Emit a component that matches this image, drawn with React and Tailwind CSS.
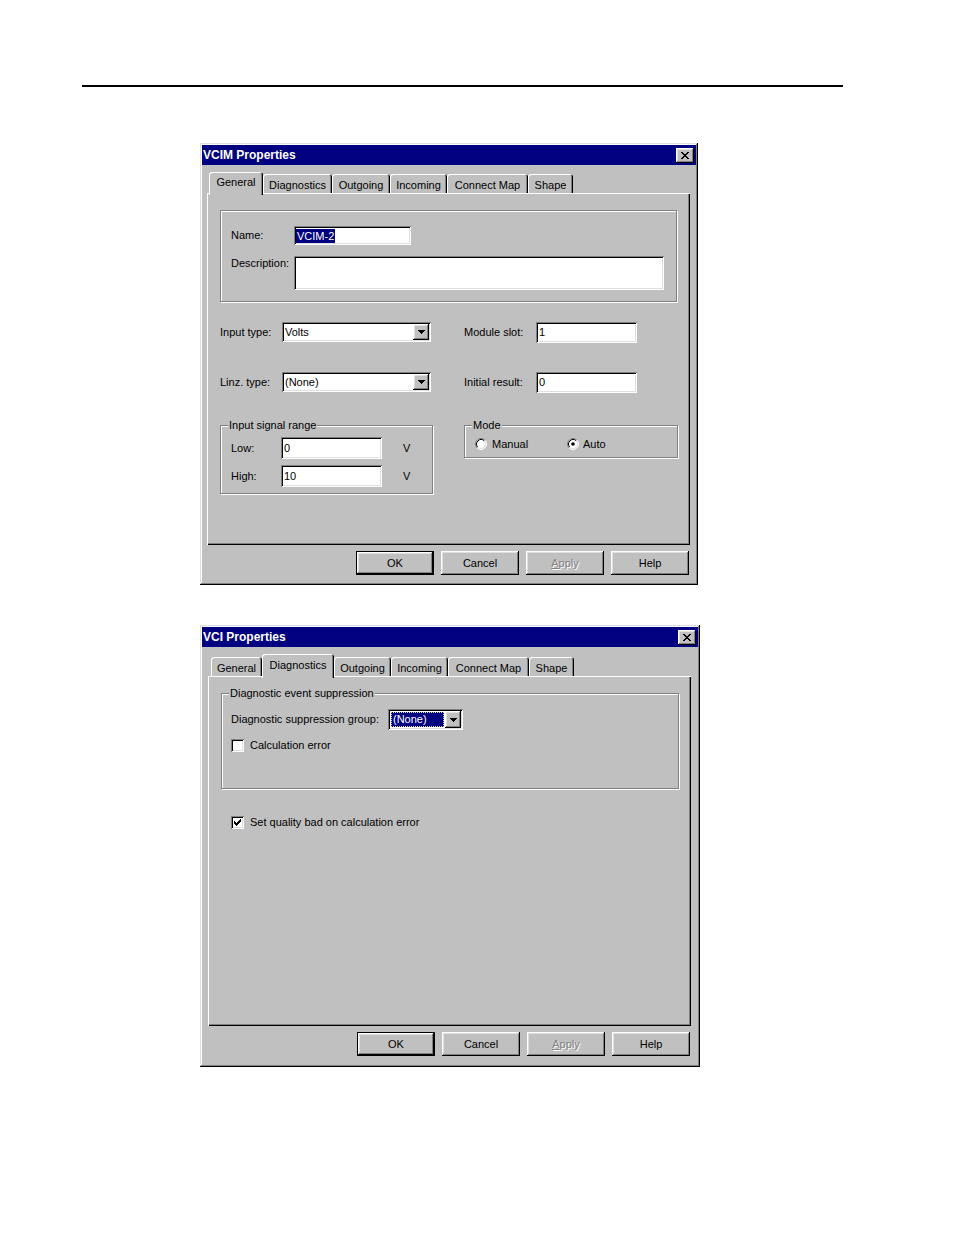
import React from "react";

const RAISED =
  "shadow-[inset_-1px_-1px_#000,inset_1px_1px_#fff,inset_-2px_-2px_#808080,inset_2px_2px_#dfdfdf]";
const WINDOW =
  "shadow-[inset_-1px_-1px_#000,inset_1px_1px_#dfdfdf,inset_-2px_-2px_#808080,inset_2px_2px_#fff]";
const SUNKEN =
  "shadow-[inset_1px_1px_#808080,inset_-1px_-1px_#fff,inset_2px_2px_#000,inset_-2px_-2px_#dfdfdf]";

const CLOSE_X = [
  "##....##",
  ".##..##.",
  "..####..",
  "...##...",
  "..####..",
  ".##..##.",
  "##....##",
];
const ARROW = ["#######", ".#####.", "..###..", "...#..."];
const CHECK = [
  "......#",
  ".....##",
  "#...###",
  "##.###.",
  "#####..",
  ".###...",
  "..#....",
];

function Pixels({ rows, color = "#000" }) {
  const w = rows[0].length;
  const h = rows.length;
  const rects = [];
  rows.forEach((r, y) =>
    [...r].forEach((c, x) => {
      if (c === "#")
        rects.push(<rect key={x + "-" + y} x={x} y={y} width="1" height="1" />);
    })
  );
  return (
    <svg width={w} height={h} viewBox={`0 0 ${w} ${h}`} fill={color} shapeRendering="crispEdges">
      {rects}
    </svg>
  );
}

function Window({ title, className, children }) {
  return (
    <div className={`${className} h-[442px] bg-[#c0c0c0] p-[2px] ${WINDOW}`}>
      <div className="h-[20px] bg-[#000080] flex items-center justify-between pl-[1px] pr-[2px]">
        <span className="text-white font-bold text-[12px] leading-none">{title}</span>
        <div className={`w-[18px] h-[15px] bg-[#c0c0c0] flex items-center justify-center ${RAISED}`}>
          <Pixels rows={CLOSE_X} />
        </div>
      </div>
      {children}
    </div>
  );
}

function Tab({ className, selected, children }) {
  return (
    <div
      className={`${className} ${
        selected ? "relative z-10 -mb-[2px] pb-[2px]" : "h-[19px] pt-[3px]"
      } bg-[#c0c0c0] rounded-t-[3px] flex items-center justify-center shadow-[inset_1px_1px_#fff,inset_-1px_0_#000,inset_-2px_0_#808080]`}
    >
      {children}
    </div>
  );
}

function Panel({ className, children }) {
  return (
    <div
      className={`${className} w-[483px] bg-[#c0c0c0] shadow-[inset_1px_1px_#fff,inset_-1px_-1px_#000,inset_-2px_-2px_#808080]`}
    >
      {children}
    </div>
  );
}

function Btn({ children, def, disabled }) {
  return (
    <div
      className={`w-[78px] h-[24px] bg-[#c0c0c0] flex items-center justify-center ${RAISED} ${
        def ? "border border-black" : ""
      } ${disabled ? "text-[#808080] [text-shadow:1px_1px_0_#fff]" : ""}`}
    >
      {children}
    </div>
  );
}

function Buttons() {
  return (
    <div className="mt-[6px] w-[483px] pr-[1px] flex justify-end gap-[7px]">
      <Btn def>OK</Btn>
      <Btn>Cancel</Btn>
      <Btn disabled>
        <span>
          <span className="underline">A</span>pply
        </span>
      </Btn>
      <Btn>Help</Btn>
    </div>
  );
}

function Field({ className, children }) {
  return <div className={`${className} bg-white flex items-center ${SUNKEN}`}>{children}</div>;
}

function DropBtn() {
  return (
    <div className={`w-[16px] bg-[#c0c0c0] flex items-center justify-center ${RAISED}`}>
      <Pixels rows={ARROW} />
    </div>
  );
}

function Select({ className, children }) {
  return (
    <div className={`${className} bg-white p-[2px] flex ${SUNKEN}`}>
      <div className="flex-1 flex items-center pl-[1px]">{children}</div>
      <DropBtn />
    </div>
  );
}

function Group({ label, className, children }) {
  return (
    <div className={`relative border border-[#808080] shadow-[inset_1px_1px_#fff,1px_1px_#fff] ${className}`}>
      {label && (
        <span className="absolute left-[7px] top-[-8px] bg-[#c0c0c0] px-[1px] leading-[14px] whitespace-nowrap">
          {label}
        </span>
      )}
      {children}
    </div>
  );
}

function Radio({ checked }) {
  return (
    <svg width="12" height="12" viewBox="0 0 12 12">
      <circle cx="6" cy="6" r="5" fill="#fff" />
      <path d="M2.11 9.89A5.5 5.5 0 0 1 9.89 2.11" stroke="#808080" fill="none" />
      <path d="M9.89 2.11A5.5 5.5 0 0 1 2.11 9.89" stroke="#fff" fill="none" />
      <path d="M2.82 9.18A4.5 4.5 0 0 1 9.18 2.82" stroke="#000" fill="none" />
      <path d="M9.18 2.82A4.5 4.5 0 0 1 2.82 9.18" stroke="#dfdfdf" fill="none" />
      {checked && <circle cx="6" cy="6" r="1.8" fill="#000" />}
    </svg>
  );
}

function Check({ checked }) {
  return (
    <div className={`w-[13px] h-[13px] shrink-0 bg-white flex items-center justify-center ${SUNKEN}`}>
      {checked && <Pixels rows={CHECK} />}
    </div>
  );
}

export default function App() {
  return (
    <div className="w-[954px] h-[1235px] bg-white overflow-hidden font-['Liberation_Sans',Arial,sans-serif] text-[11px] leading-[13px] text-black flex flex-col items-start">
      <div className="mt-[85px] ml-[82px] w-[761px] h-[2px] bg-black" />

      {/* Dialog 1 */}
      <Window title="VCIM Properties" className="mt-[56px] ml-[200px] w-[498px]">
        <div className="pl-[5px]">
          <div className="mt-[7px] h-[21px] flex items-end pl-[2px]">
            <Tab selected className="w-[54px] h-[23px]">General</Tab>
            <Tab className="w-[69px]">Diagnostics</Tab>
            <Tab className="w-[58px]">Outgoing</Tab>
            <Tab className="w-[57px]">Incoming</Tab>
            <Tab className="w-[81px]">Connect Map</Tab>
            <Tab className="w-[45px]">Shape</Tab>
          </div>
          <Panel className="h-[352px]">
            <div className="pl-[13px] pt-[17px]">
              <Group className="w-[457px] h-[92px] pt-[15px] pl-[10px]">
                <div className="flex items-center">
                  <span className="w-[63px]">Name:</span>
                  <Field className="w-[117px] h-[19px] pl-[2px]">
                    <span className="bg-[#000080] text-white leading-[14px] px-[1px]">VCIM-2</span>
                  </Field>
                </div>
                <div className="mt-[11px] flex items-start">
                  <span className="w-[63px] pt-[1px]">Description:</span>
                  <Field className="w-[370px] h-[34px]" />
                </div>
              </Group>

              <div className="mt-[20px] flex items-start">
                <div className="w-[244px] flex items-center">
                  <span className="w-[62px]">Input type:</span>
                  <Select className="w-[149px] h-[20px]">Volts</Select>
                </div>
                <div className="flex items-center">
                  <span className="w-[72px]">Module slot:</span>
                  <Field className="w-[101px] h-[21px] pl-[3px]">1</Field>
                </div>
              </div>

              <div className="mt-[29px] flex items-start">
                <div className="w-[244px] flex items-center">
                  <span className="w-[62px]">Linz. type:</span>
                  <Select className="w-[149px] h-[20px]">(None)</Select>
                </div>
                <div className="flex items-center">
                  <span className="w-[72px]">Initial result:</span>
                  <Field className="w-[101px] h-[21px] pl-[3px]">0</Field>
                </div>
              </div>

              <div className="mt-[32px] flex items-start">
                <Group label="Input signal range" className="w-[213px] h-[69px] pt-[11px] pl-[10px]">
                  <div className="flex items-center">
                    <span className="w-[50px]">Low:</span>
                    <Field className="w-[101px] h-[22px] pl-[3px]">0</Field>
                    <span className="ml-[21px]">V</span>
                  </div>
                  <div className="mt-[6px] flex items-center">
                    <span className="w-[50px]">High:</span>
                    <Field className="w-[101px] h-[22px] pl-[3px]">10</Field>
                    <span className="ml-[21px]">V</span>
                  </div>
                </Group>
                <Group label="Mode" className="ml-[31px] w-[214px] h-[33px] pt-[11px] pl-[10px]">
                  <div className="h-[14px] flex items-center">
                    <div className="w-[92px] flex items-center gap-[5px]">
                      <Radio />
                      <span>Manual</span>
                    </div>
                    <div className="flex items-center gap-[4px]">
                      <Radio checked />
                      <span>Auto</span>
                    </div>
                  </div>
                </Group>
              </div>
            </div>
          </Panel>
          <Buttons />
        </div>
      </Window>

      {/* Dialog 2 */}
      <Window title="VCI Properties" className="mt-[40px] ml-[200px] w-[500px]">
        <div className="pl-[6px]">
          <div className="mt-[7px] h-[22px] flex items-end pl-[3px]">
            <Tab className="w-[51px]">General</Tab>
            <Tab selected className="w-[72px] h-[24px]">Diagnostics</Tab>
            <Tab className="w-[57px]">Outgoing</Tab>
            <Tab className="w-[57px]">Incoming</Tab>
            <Tab className="w-[81px]">Connect Map</Tab>
            <Tab className="w-[45px]">Shape</Tab>
          </div>
          <Panel className="h-[350px]">
            <div className="pl-[13px] pt-[17px]">
              <Group label="Diagnostic event suppression" className="w-[458px] h-[96px] pt-[15px] pl-[9px]">
                <div className="flex items-center">
                  <span className="w-[157px]">Diagnostic suppression group:</span>
                  <div className={`w-[75px] h-[21px] bg-white p-[2px] flex ${SUNKEN}`}>
                    <div className="flex-1 p-[1px] flex">
                      <div className="flex-1 bg-[#000080] text-white flex items-center pl-[1px] border border-dotted border-[#d8d890]">
                        (None)
                      </div>
                    </div>
                    <DropBtn />
                  </div>
                </div>
                <div className="mt-[9px] flex items-center gap-[6px]">
                  <Check />
                  <span>Calculation error</span>
                </div>
              </Group>
              <div className="mt-[27px] ml-[10px] flex items-center gap-[6px]">
                <Check checked />
                <span>Set quality bad on calculation error</span>
              </div>
            </div>
          </Panel>
          <Buttons />
        </div>
      </Window>
    </div>
  );
}
